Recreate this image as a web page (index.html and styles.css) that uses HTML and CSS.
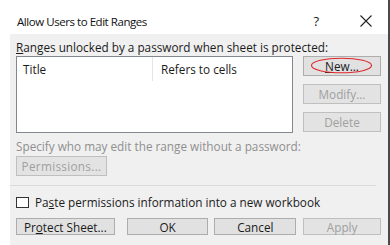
FILE: index.html
```html
<!DOCTYPE html>
<html lang="en">
<head>
    <meta charset="UTF-8">
    <title>Allow Users to Edit Ranges</title>
    <link rel="stylesheet" href="styles.css">
</head>
<body>
    <div class="window">
        <div class="titlebar">
            <span class="title">Allow Users to Edit Ranges</span>
            <span class="help">?</span>
            <svg class="close" width="12" height="12" viewBox="0 0 12 12">
                <path d="M0.5 0.5 L11.5 11.5 M11.5 0.5 L0.5 11.5" stroke="#222" stroke-width="1.1" fill="none"/>
            </svg>
        </div>
        <div class="panel">
            <div class="label"><u>R</u>anges unlocked by a password when sheet is protected:</div>
            <div class="ranges">
                <div class="listbox">
                    <div class="list-head">
                        <div class="col col-title">Title</div>
                        <div class="col col-refs">Refers to cells</div>
                    </div>
                </div>
                <div class="side-buttons">
                    <div class="btn-wrap">
                        <button class="btn side"><u>N</u>ew...</button>
                        <svg class="mark" width="64" height="17" viewBox="0 0 64 17">
                            <ellipse cx="31.5" cy="8.5" rx="30" ry="7.3" stroke="#e0262b" stroke-width="1.1" fill="none"/>
                        </svg>
                    </div>
                    <button class="btn side is-disabled">Modify...</button>
                    <button class="btn side is-disabled">Delete</button>
                </div>
            </div>
            <div class="label is-disabled specify">Specify who may edit the range without a password:</div>
            <button class="btn perms is-disabled">Permissions...</button>
            <div class="separator"></div>
            <label class="check-row">
                <span class="checkbox"></span>
                <span>Pa<u>s</u>te permissions information into a new workbook</span>
            </label>
            <div class="bottom-buttons">
                <button class="btn protect">Pr<u>o</u>tect Sheet...</button>
                <button class="btn ok">OK</button>
                <button class="btn cancel">Cancel</button>
                <button class="btn apply is-disabled">Apply</button>
            </div>
        </div>
    </div>
</body>
</html>
```

FILE: styles.css
```css
:root {
    --panel: #f0f0f0;
    --text: #1b1b1b;
    --disabled: #8f8f8f;
    --btn-bg: #e1e1e1;
    --btn-border: #adadad;
}

body {
    margin: 0;
    background: #fff;
    font-family: 'Open Sans', 'Noto Sans', sans-serif;
    font-size: 11.75px;
    color: var(--text);
}

/* --- Window --- */
.window {
    width: 388px;
    height: 245px;
    border-right: 2px solid #4a4a4a;
    display: flex;
    flex-direction: column;
    overflow: hidden;
}

.titlebar {
    height: 34px;
    flex-shrink: 0;
    display: flex;
    align-items: center;
    padding-left: 17px;
    padding-top: 8px;
    box-sizing: border-box;
}
.title { font-size: 11.5px; letter-spacing: -0.45px; color: #111; flex-grow: 1; }
.help { font-size: 13px; margin-right: 41px; }
.close { margin-right: 16px; }

.panel {
    flex-grow: 1;
    margin-left: 10px;
    background: var(--panel);
    padding: 6px 7px 0 6px;
}

.label { line-height: 15px; white-space: nowrap; }
.label.is-disabled, .is-disabled { color: var(--disabled); }

/* --- Ranges list --- */
.ranges { display: flex; margin-top: 1px; gap: 10px; }

.listbox {
    width: 277px;
    height: 77px;
    background: #fff;
    border: 1px solid #828790;
    box-sizing: border-box;
}
.list-head { display: flex; height: 24px; align-items: center; }
.col { line-height: 24px; }
.col-title { width: 129px; padding-left: 6px; border-right: 1px solid #e5e5e5; }
.col-refs { padding-left: 8px; }

.side-buttons { display: flex; flex-direction: column; gap: 8px; }

.btn {
    font-family: inherit;
    font-size: 11.75px;
    color: var(--text);
    background: var(--btn-bg);
    border: 1px solid var(--btn-border);
    padding: 0;
    margin: 0;
    box-sizing: border-box;
}
.btn.is-disabled { color: #a0a0a0; background: #e3e3e3; border-color: #bfbfbf; }

.side { width: 78px; height: 20px; }

.btn-wrap { position: relative; }
.mark { position: absolute; left: 7px; top: 1px; }

/* --- Permissions --- */
.specify { margin-top: 6px; }
.perms { width: 91px; height: 20px; margin-top: 2px; letter-spacing: 0.3px; }

.separator { height: 1px; background: #dadada; margin: 9px 5px 0 -6px; }

.check-row { display: flex; align-items: center; gap: 6px; margin-top: 10px; height: 12px; }
.checkbox {
    width: 13px;
    height: 11px;
    border: 1px solid #333;
    background: #fff;
    box-sizing: border-box;
}

.bottom-buttons { display: flex; margin-top: 10px; }
.bottom-buttons .btn { height: 17px; }
.protect { width: 99px; }
.ok { width: 82px; margin-left: 12px; }
.cancel { width: 82px; margin-left: 6px; }
.apply { width: 78px; margin-left: 7px; }
```
